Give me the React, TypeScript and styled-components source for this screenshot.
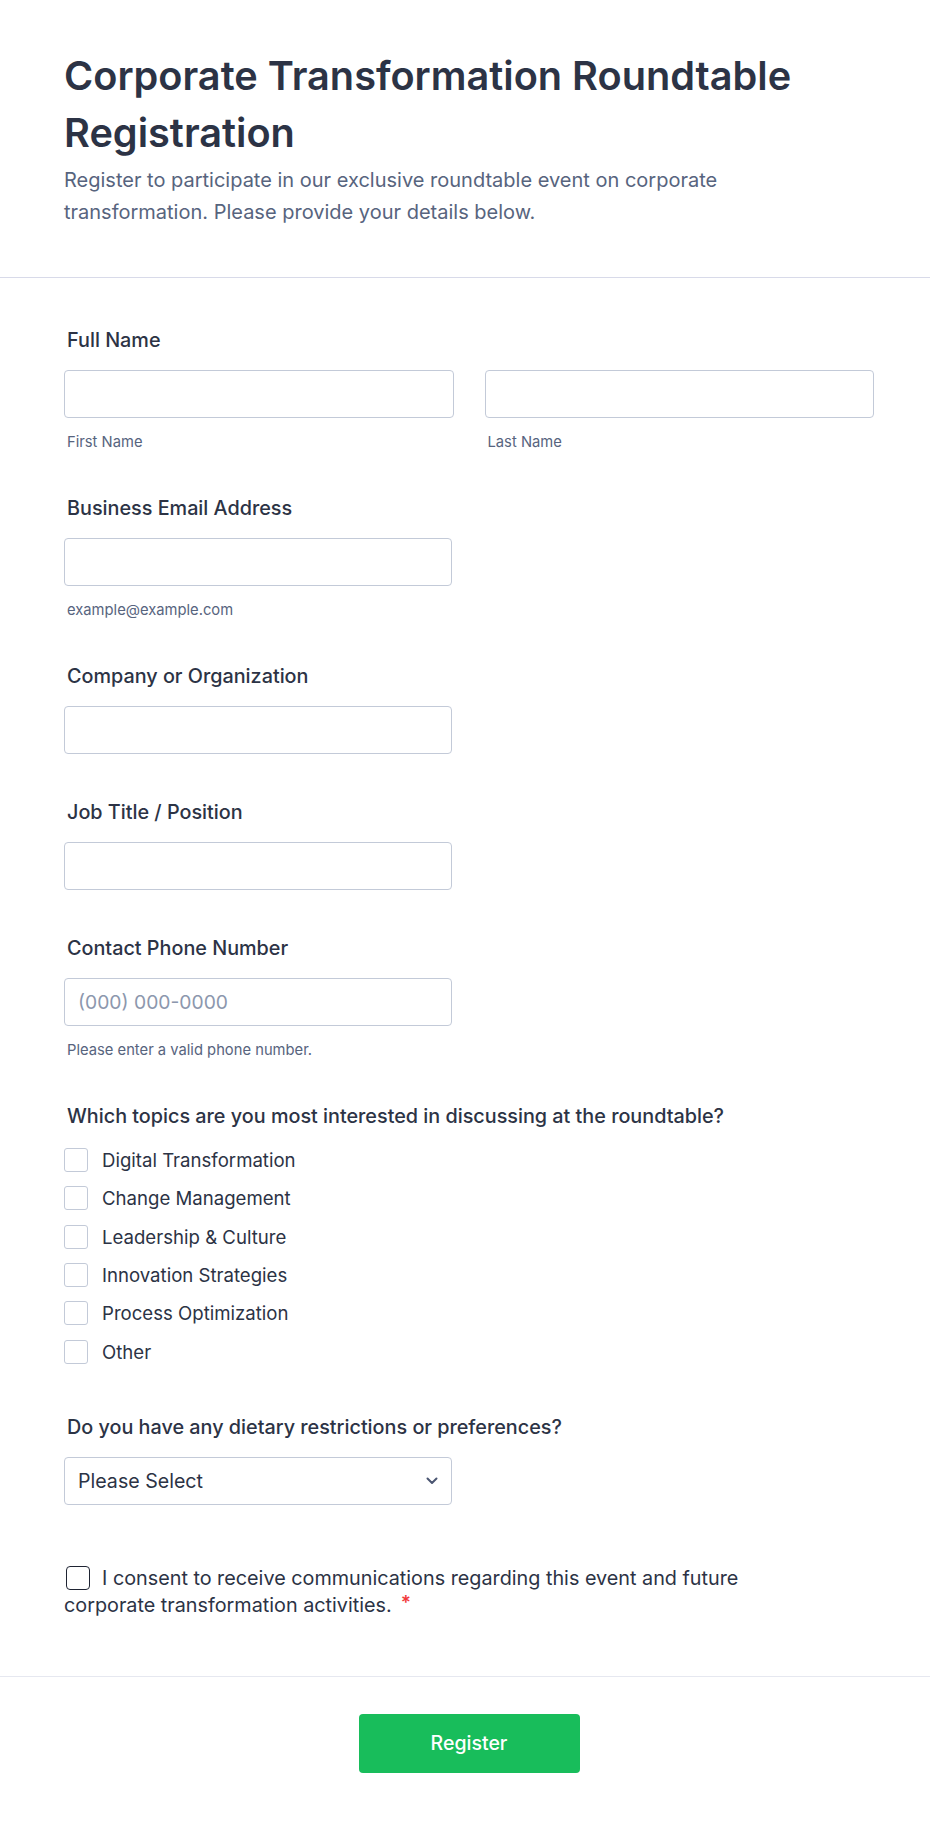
import React from "react";
import styled, { createGlobalStyle } from "styled-components";

const GlobalStyle = createGlobalStyle`
  * { box-sizing: border-box; }
  html, body { margin: 0; padding: 0; background: #ffffff; }
  body {
    font-family: Inter, "Noto Sans", "Liberation Sans", sans-serif;
    color: #2c3345;
    -webkit-font-smoothing: antialiased;
  }
`;

const Page = styled.div`
  width: 100%;
  background: #ffffff;
`;

const Header = styled.header`
  padding: 48px 56px 49px 64px;
  border-bottom: 1px solid #d8dae9;
`;

const Title = styled.h1`
  margin: 0;
  font-size: 39.7px;
  line-height: 57px;
  font-weight: 600;
  color: #2c3345;
`;

const Subtitle = styled.p`
  margin: 3px 0 0;
  font-size: 20px;
  line-height: 31.5px;
  font-weight: 400;
  color: #57647e;
  max-width: 720px;
`;

const Form = styled.form`
  display: flex;
  flex-direction: column;
  gap: 44px;
  padding: 48px 56px 57px 64px;
`;

const Field = styled.div<{ $extraTop?: number }>`
  display: flex;
  flex-direction: column;
  margin-top: ${(p) => p.$extraTop ?? 0}px;
`;

const Label = styled.label`
  display: block;
  padding-left: 3px;
  margin-bottom: 16px;
  font-size: 19.8px;
  line-height: 28px;
  font-weight: 500;
  color: #2c3345;
`;

const Row = styled.div`
  display: grid;
  grid-template-columns: 1fr 1fr;
  column-gap: 31px;
`;

const Half = styled.div`
  width: 388px;
  display: flex;
  flex-direction: column;
`;

const Col = styled.div`
  display: flex;
  flex-direction: column;
`;

const Input = styled.input`
  width: 100%;
  height: 48px;
  padding: 0 13px;
  border: 1px solid #c3cad8;
  border-radius: 4px;
  background: #ffffff;
  font-family: inherit;
  font-size: 19.3px;
  color: #2c3345;
  outline: none;
  &::placeholder {
    color: #8c97ad;
  }
`;

const Helper = styled.span`
  display: block;
  margin-top: 16px;
  padding-left: 3px;
  font-size: 14.75px;
  line-height: 16px;
  color: #57647e;
`;

const CheckList = styled.div`
  display: flex;
  flex-direction: column;
  gap: 10.35px;
  padding-bottom: 3px;
`;

const CheckRow = styled.label`
  display: flex;
  align-items: center;
  gap: 14px;
  height: 28px;
  font-size: 18.6px;
  color: #2c3345;
`;

const Box = styled.span`
  flex: 0 0 auto;
  width: 24px;
  height: 24px;
  border: 1px solid #c3cad8;
  border-radius: 3px;
  background: #ffffff;
`;

const SelectBox = styled.div`
  width: 388px;
  height: 48px;
  border: 1px solid #c3cad8;
  border-radius: 4px;
  background: #ffffff;
  display: flex;
  align-items: center;
  justify-content: space-between;
  padding: 0 13px;
  font-size: 19.6px;
  color: #2c3345;
`;

const Chevron = styled.svg`
  width: 12px;
  height: 8px;
`;

const Consent = styled.p`
  margin: 0;
  max-width: 700px;
  font-size: 19.8px;
  line-height: 27px;
  color: #2c3345;
`;

const ConsentBox = styled.span`
  display: inline-block;
  vertical-align: -1px;
  width: 24px;
  height: 24px;
  margin: -4px 12px -4px 2px;
  border: 1.5px solid #1f2433;
  border-radius: 4px;
  background: #ffffff;
`;

const Required = styled.span`
  color: #f23a3c;
  margin-left: 9px;
  font-size: 19px;
  line-height: 1;
  font-weight: 600;
  vertical-align: 3px;
`;

const Footer = styled.div`
  border-top: 1px solid #e6e8f0;
  padding: 37px 56px 50px 64px;
  display: flex;
  justify-content: center;
`;

const Button = styled.button`
  width: 221px;
  height: 59px;
  border: none;
  border-radius: 4px;
  background: #18bd5b;
  color: #ffffff;
  font-family: inherit;
  font-size: 19.5px;
  font-weight: 500;
  cursor: pointer;
`;

const topics = [
  "Digital Transformation",
  "Change Management",
  "Leadership & Culture",
  "Innovation Strategies",
  "Process Optimization",
  "Other",
];

export default function App() {
  return (
    <Page>
      <GlobalStyle />
      <Header>
        <Title>Corporate Transformation Roundtable Registration</Title>
        <Subtitle>
          Register to participate in our exclusive roundtable event on corporate
          transformation. Please provide your details below.
        </Subtitle>
      </Header>
      <Form onSubmit={(e) => e.preventDefault()}>
        <Field>
          <Label>Full Name</Label>
          <Row>
            <Col>
              <Input type="text" />
              <Helper>First Name</Helper>
            </Col>
            <Col>
              <Input type="text" />
              <Helper>Last Name</Helper>
            </Col>
          </Row>
        </Field>
        <Field>
          <Label>Business Email Address</Label>
          <Half>
            <Input type="email" />
            <Helper>example@example.com</Helper>
          </Half>
        </Field>
        <Field>
          <Label>Company or Organization</Label>
          <Half>
            <Input type="text" />
          </Half>
        </Field>
        <Field>
          <Label>Job Title / Position</Label>
          <Half>
            <Input type="text" />
          </Half>
        </Field>
        <Field>
          <Label>Contact Phone Number</Label>
          <Half>
            <Input type="tel" placeholder="(000) 000-0000" />
            <Helper>Please enter a valid phone number.</Helper>
          </Half>
        </Field>
        <Field>
          <Label>Which topics are you most interested in discussing at the roundtable?</Label>
          <CheckList>
            {topics.map((t) => (
              <CheckRow key={t}>
                <Box />
                {t}
              </CheckRow>
            ))}
          </CheckList>
        </Field>
        <Field>
          <Label>Do you have any dietary restrictions or preferences?</Label>
          <SelectBox>
            <span>Please Select</span>
            <Chevron viewBox="0 0 12 8" fill="none">
              <path d="M1.5 1.5 L6 6 L10.5 1.5" stroke="#4b5672" strokeWidth="2" strokeLinecap="round" strokeLinejoin="round" />
            </Chevron>
          </SelectBox>
        </Field>
        <Field $extraTop={16}>
          <Consent>
            <ConsentBox />
            I consent to receive communications regarding this event and future
            corporate transformation activities.
            <Required>*</Required>
          </Consent>
        </Field>
      </Form>
      <Footer>
        <Button type="submit">Register</Button>
      </Footer>
    </Page>
  );
}
